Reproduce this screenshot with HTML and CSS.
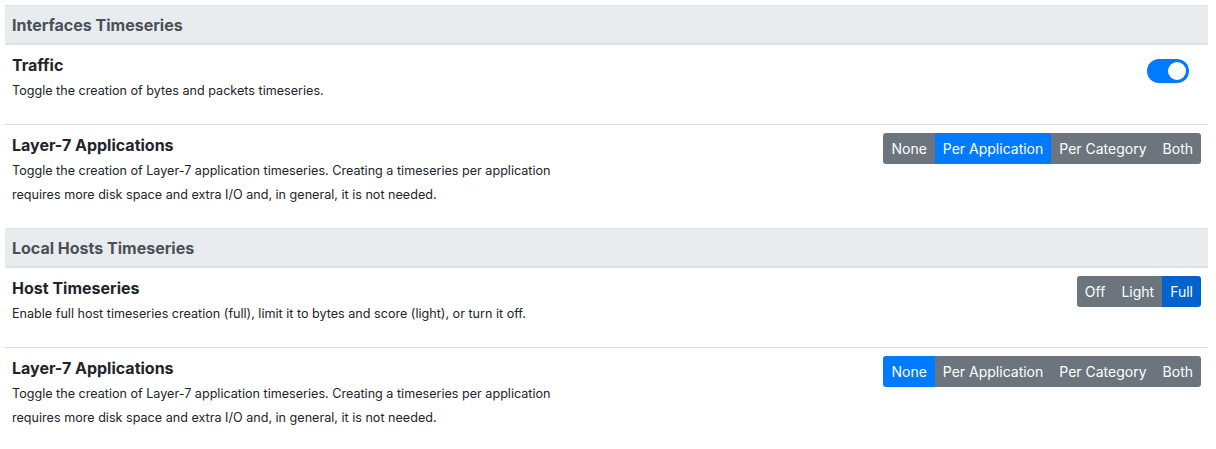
FILE: index.html
```html
<!DOCTYPE html>
<html>
<head>
<meta charset="utf-8">
<link rel="stylesheet" href="styles.css">
</head>
<body>
<div class="prefs">
  <div class="section-head">Interfaces Timeseries</div>
  <div class="pref first">
    <div class="info">
      <div class="title">Traffic</div>
      <div class="desc">Toggle the creation of bytes and packets timeseries.</div>
    </div>
    <div class="control switch-cell">
      <span class="switch on"><span class="knob"></span></span>
    </div>
  </div>
  <div class="pref">
    <div class="info">
      <div class="title">Layer-7 Applications</div>
      <div class="desc">Toggle the creation of Layer-7 application timeseries. Creating a timeseries per application<br>requires more disk space and extra I/O and, in general, it is not needed.</div>
    </div>
    <div class="control">
      <div class="btn-group">
        <span class="btn">None</span><span class="btn active">Per Application</span><span class="btn">Per Category</span><span class="btn">Both</span>
      </div>
    </div>
  </div>
  <div class="section-head">Local Hosts Timeseries</div>
  <div class="pref first">
    <div class="info">
      <div class="title">Host Timeseries</div>
      <div class="desc">Enable full host timeseries creation (full), limit it to bytes and score (light), or turn it off.</div>
    </div>
    <div class="control">
      <div class="btn-group">
        <span class="btn">Off</span><span class="btn">Light</span><span class="btn pressed">Full</span>
      </div>
    </div>
  </div>
  <div class="pref last">
    <div class="info">
      <div class="title">Layer-7 Applications</div>
      <div class="desc">Toggle the creation of Layer-7 application timeseries. Creating a timeseries per application<br>requires more disk space and extra I/O and, in general, it is not needed.</div>
    </div>
    <div class="control">
      <div class="btn-group">
        <span class="btn active">None</span><span class="btn">Per Application</span><span class="btn">Per Category</span><span class="btn">Both</span>
      </div>
    </div>
  </div>
</div>
</body>
</html>
```
FILE: styles.css
```css
* { box-sizing: border-box; }
html, body { margin: 0; padding: 0; background: #fff; }
body {
  font-family: Inter, "Liberation Sans", sans-serif;
  color: #212529;
  padding: 5px 8px 0 5px;
}
.prefs { width: 1203px; }
.section-head {
  background: #e9ecef;
  border-top: 1px solid #dee2e6;
  border-bottom: 2px solid #dee2e6;
  height: 40px;
  padding: 0 7px;
  display: flex;
  align-items: center;
  font-size: 16px;
  font-weight: 700;
  color: #495057;
}
.pref {
  display: flex;
  justify-content: space-between;
  border-top: 1px solid #dee2e6;
  padding: 10px 7px 21px 7px;
}
.pref.first { border-top: none; }
.title {
  font-size: 16px;
  font-weight: 700;
  line-height: 20px;
  margin-bottom: 4px;
}
.desc {
  font-size: 12.6px;
  line-height: 24px;
}
.control { margin-top: -2px; }
.switch-cell { margin-top: 4px; margin-right: 12px; }
.switch {
  display: block;
  width: 42px;
  height: 24px;
  border-radius: 12px;
  background: #007bff;
  position: relative;
}
.switch .knob {
  position: absolute;
  top: 3px;
  right: 3px;
  width: 18px;
  height: 18px;
  border-radius: 50%;
  background: #fff;
}
.btn-group {
  display: flex;
  border-radius: 3px;
  overflow: hidden;
}
.btn {
  display: block;
  background: #6c757d;
  color: #fff;
  font-size: 14px;
  line-height: 21px;
  padding: 5px 8px;
}
.btn.active { background: #007bff; }
.btn.pressed { background: #0062cc; }
```
